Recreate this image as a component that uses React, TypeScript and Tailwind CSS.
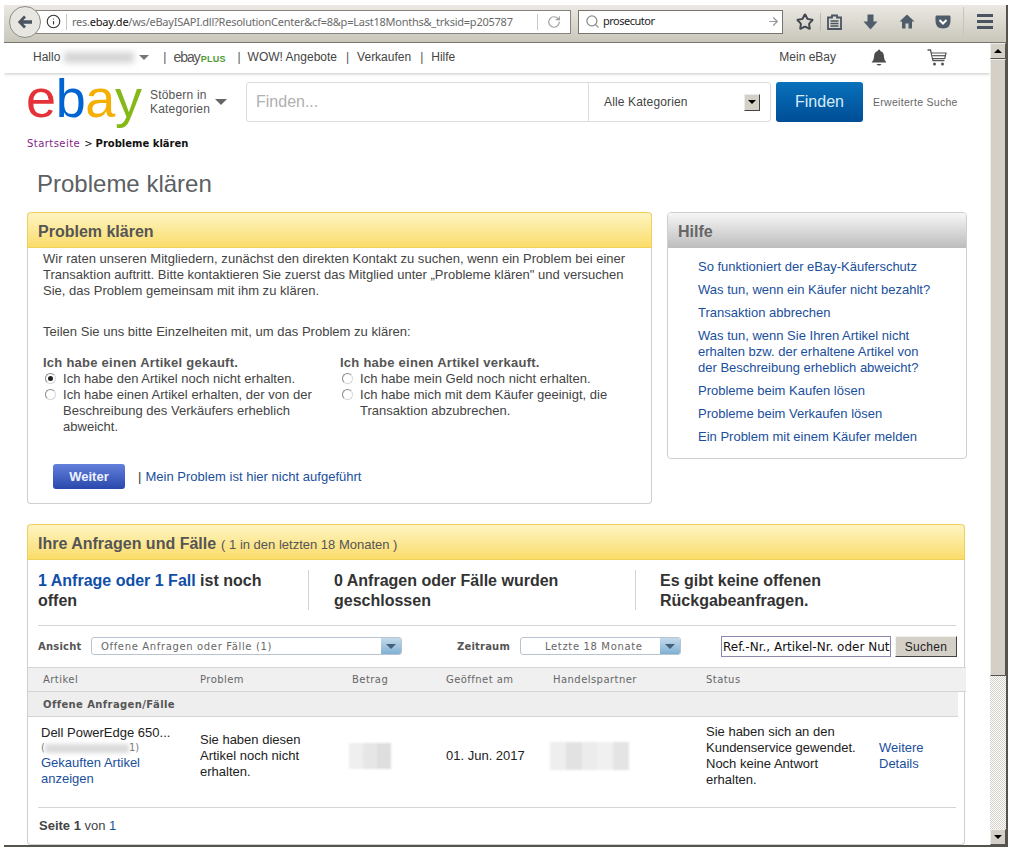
import React from "react";
import { Info, RotateCw, Search, ArrowRight, Star } from "lucide-react";

const sans = "font-['Liberation_Sans',Arial,sans-serif]";
const verdana = "font-['DejaVu_Sans',sans-serif]";

function Radio({ checked }: { checked?: boolean }) {
  return (
    <span className="mt-[2px] flex h-[11px] w-[11px] shrink-0 items-center justify-center rounded-full border border-[#8a8a8a] border-r-[#d8d8d8] border-b-[#d8d8d8] bg-white">
      {checked && <span className="h-[5px] w-[5px] rounded-full bg-[#222]" />}
    </span>
  );
}

function RadioRow({ checked, children }: { checked?: boolean; children: React.ReactNode }) {
  return (
    <div className="flex gap-[7px] pl-[2px]">
      <Radio checked={checked} />
      <span>{children}</span>
    </div>
  );
}

function Caret({ className }: { className: string }) {
  return <span className={"h-0 w-0 border-x-[5px] border-t-[5px] border-x-transparent " + className} />;
}

function BlueSelect({ text, width, indent }: { text: string; width: string; indent: string }) {
  return (
    <div className={"flex h-[18px] items-center rounded-[3px] border border-[#b8c4d0] bg-white " + width}>
      <span className={"flex-1 pt-[1px] text-[10px] tracking-[0.65px] text-[#666] " + verdana + " " + indent}>{text}</span>
      <span className="flex h-full w-[20px] items-center justify-center rounded-r-[2px] bg-gradient-to-b from-[#c4daea] to-[#7fb0d4]">
        <Caret className="border-t-[#44607a]" />
      </span>
    </div>
  );
}

function Toolbar() {
  return (
    <div className="flex h-[38px] shrink-0 items-center border-b border-b-[#77756f] bg-gradient-to-b from-[#ece9e4] to-[#c9c6ba] pb-[4px]">
      <div className="z-10 ml-[5px] flex h-[32px] w-[32px] shrink-0 items-center justify-center rounded-full border border-[#8e8c86] bg-[#e8e6e1]">
        <svg width="16" height="14" viewBox="0 0 16 14">
          <path d="M7 0.5 L0.8 7 L7 13.5 L9 11.6 L6.2 8.8 H15 V5.2 H6.2 L9 2.4 Z" fill="#4a5561" />
        </svg>
      </div>
      <div className="ml-[-7px] flex h-[24px] w-[537px] items-center border border-[#85837d] bg-white pl-[11px]">
        <Info size={15} strokeWidth={1.8} className="shrink-0 text-[#333]" />
        <span className="ml-[5px] h-[16px] w-px bg-[#c8c8c8]" />
        <span className="ml-[5px] w-[440px] whitespace-nowrap font-['Noto_Sans',sans-serif] text-[11px] leading-none tracking-[-0.24px] text-[#6a6a6a]">
          res.<span className="text-[#111]">ebay.de</span>/ws/eBayISAPI.dll?ResolutionCenter&amp;cf=8&amp;p=Last18Months&amp;_trksid=p205787
        </span>
        <span className="ml-[25px] h-[16px] w-px bg-[#c8c8c8]" />
        <RotateCw size={14} strokeWidth={2} className="ml-[9px] text-[#9a9a9a]" />
      </div>
      <div className="ml-[7px] flex h-[24px] w-[205px] items-center border border-[#77756f] bg-white pl-[6px]">
        <Search size={15} strokeWidth={2} className="shrink-0 text-[#8a8a8a]" />
        <span className="ml-[3px] flex-1 font-['Noto_Sans',sans-serif] text-[11px] tracking-[-0.5px] text-[#222]">prosecutor</span>
        <ArrowRight size={13} strokeWidth={2.2} className="mr-[2px] text-[#999]" />
      </div>
      <div className="ml-[13px] flex items-center">
        <Star size={18} strokeWidth={2.6} className="text-[#3e4650]" />
        <span className="ml-[6px] h-[18px] w-px bg-[#bdbab2]" />
        <svg className="ml-[6px]" width="15" height="16" viewBox="0 0 15 16">
          <path d="M1 3.5 H5 V1.5 H10 V3.5 H14 V15 H1 Z" fill="none" stroke="#4a5561" strokeWidth="1.8" />
          <path d="M3.5 7 H11.5 M3.5 9.5 H11.5 M3.5 12 H11.5" stroke="#4a5561" strokeWidth="1.4" />
        </svg>
        <svg className="ml-[21px]" width="15" height="16" viewBox="0 0 15 16">
          <path d="M4.5 0.5 H10.5 V7.5 H14.5 L7.5 15.5 L0.5 7.5 H4.5 Z" fill="#4f5d6b" />
        </svg>
        <svg className="ml-[21px]" width="16" height="15" viewBox="0 0 16 15">
          <path d="M8 0.5 L15.5 7.5 H13 V14.5 H9.5 V9.5 H6.5 V14.5 H3 V7.5 H0.5 Z" fill="#4f5d6b" />
        </svg>
        <svg className="ml-[20px]" width="16" height="14" viewBox="0 0 16 14">
          <path d="M1.5 0.5 H14.5 Q15.5 0.5 15.5 2 V6 Q15.5 13.5 8 13.5 Q0.5 13.5 0.5 6 V2 Q0.5 0.5 1.5 0.5 Z" fill="#4f5d6b" />
          <path d="M4.5 5 L8 8.5 L11.5 5" fill="none" stroke="#fff" strokeWidth="2" />
        </svg>
        <span className="ml-[12px] h-[30px] w-px bg-[#c8c5bd]" />
        <div className="ml-[13px] flex w-[16px] flex-col gap-[3px]">
          <span className="h-[3px] bg-[#4a5561]" />
          <span className="h-[3px] bg-[#4a5561]" />
          <span className="h-[3px] bg-[#4a5561]" />
        </div>
      </div>
    </div>
  );
}

function Scrollbar() {
  const btn = "flex h-[16px] shrink-0 items-center justify-center border border-[#eeece6] border-r-[#55534e] border-b-[#55534e] bg-[#d4d0c8]";
  return (
    <div className="flex w-[16px] shrink-0 flex-col bg-[repeating-conic-gradient(#d4d0c8_0%_25%,#ffffff_0%_50%)] bg-[length:2px_2px]">
      <div className={btn}>
        <span className="h-0 w-0 border-x-[4px] border-b-[4px] border-x-transparent border-b-black" />
      </div>
      <div className="h-[617px] shrink-0 border border-[#eeece6] border-r-[#55534e] border-b-[#55534e] bg-[#d4d0c8]" />
      <div className="flex-1" />
      <div className={btn}>
        <span className="h-0 w-0 border-x-[4px] border-t-[4px] border-x-transparent border-t-black" />
      </div>
    </div>
  );
}

function TopNav() {
  const sep = <span className="text-[#555]">|</span>;
  return (
    <div className="relative flex h-[30px] shrink-0 items-center bg-white pb-[2px] pl-[29px] text-[12px] text-[#444] shadow-[0_1px_3px_rgba(0,0,0,0.22)]">
      <span>Hallo</span>
      <span className="ml-[4px] h-[11px] w-[70px] bg-[#d4d4d4] blur-[3px]" />
      <Caret className="ml-[5px] border-t-[#777]" />
      <span className="ml-[14px]">{sep}</span>
      <span className="ml-[7px] flex w-[55px] items-baseline">
        <span className="text-[14px] tracking-[-1px] text-[#555]">ebay</span>
        <span className="ml-[1px] text-[9px] font-bold tracking-[0.2px] text-[#4f9a32]">PLUS</span>
      </span>
      <span className="ml-[9px]">{sep}</span>
      <span className="ml-[7px]">WOW! Angebote</span>
      <span className="ml-[9px]">{sep}</span>
      <span className="ml-[8px]">Verkaufen</span>
      <span className="ml-[9px]">{sep}</span>
      <span className="ml-[8px]">Hilfe</span>
      <span className="ml-[324px]">Mein eBay</span>
      <svg className="ml-[35px]" width="16" height="17" viewBox="0 0 16 17">
        <path d="M8 0.5 Q9.3 0.5 9.3 2 Q13 3 13 8 Q13 11.5 15.5 13.5 H0.5 Q3 11.5 3 8 Q3 3 6.7 2 Q6.7 0.5 8 0.5 Z" fill="#4c4c4c" />
        <path d="M5.5 15 H10.5 Q9.5 16.5 8 16.5 Q6.5 16.5 5.5 15 Z" fill="#4c4c4c" />
      </svg>
      <svg className="ml-[40px]" width="20" height="17" viewBox="0 0 20 17">
        <path d="M0.5 1 H3.5 L6 11.5 H17.5" fill="none" stroke="#555" strokeWidth="1.3" />
        <path d="M4.8 4 H19 L17.8 9.5 H6" fill="#fff" stroke="#555" strokeWidth="1.2" />
        <path d="M5.2 6.7 H18.4" stroke="#555" strokeWidth="1.2" />
        <circle cx="7.5" cy="15" r="1.5" fill="#555" />
        <circle cx="15.5" cy="15" r="1.5" fill="#555" />
      </svg>
    </div>
  );
}

function SearchRow() {
  return (
    <div className="flex h-[49px] shrink-0 items-end pl-[23px]">
      <div className="flex h-[40px] items-center">
        <div className="ml-[-1px] mt-[-9px] w-[120px] whitespace-nowrap text-[54px] leading-none tracking-[-0.4px]">
          <span className="text-[#e53238]">e</span>
          <span className="text-[#0064d2]">b</span>
          <span className="text-[#f5af02]">a</span>
          <span className="text-[#86b817]">y</span>
        </div>
        <div className="ml-[4px] w-[65px] text-[12px] leading-[14px] tracking-[0.2px] text-[#555]">
          Stöbern in Kategorien
        </div>
        <Caret className="border-x-[6px] border-t-[6px] border-t-[#666]" />
        <div className="ml-[19px] flex h-[40px] w-[525px] items-center rounded-[3px] border border-[#dcdcdc] bg-white">
          <span className="w-[341px] pl-[9px] text-[16px] text-[#b0b0b0]">Finden...</span>
          <span className="h-full w-px bg-[#dcdcdc]" />
          <span className="w-[155px] pl-[15px] text-[12px] tracking-[0.15px] text-[#444]">Alle Kategorien</span>
          <span className="flex h-[17px] w-[16px] items-center justify-center border border-[#eeece6] border-r-[#444] border-b-[#444] bg-[#d4d0c8]">
            <span className="h-0 w-0 border-x-[4px] border-t-[4px] border-x-transparent border-t-black" />
          </span>
        </div>
        <div className="ml-[5px] flex h-[40px] w-[87px] items-center justify-center rounded-[3px] bg-gradient-to-b from-[#0a71bb] to-[#004d96] text-[16px] text-[#d8ecfa]">
          Finden
        </div>
        <span className="ml-[10px] whitespace-nowrap pt-[1px] text-[10.5px] tracking-[0.3px] text-[#666]">Erweiterte Suche</span>
      </div>
    </div>
  );
}

function ProblemCard() {
  return (
    <div className="h-[292px] w-[625px] rounded-[4px] border border-[#cfcfcf] border-t-0">
      <div className="mx-[-1px] flex h-[36px] items-center rounded-t-[4px] border border-[#f0d05c] bg-gradient-to-b from-[#fdf4c0] to-[#fbdc68] pl-[10px] pt-[3px] text-[16px] font-bold text-[#555]">
        Problem klären
      </div>
      <div className="pl-[15px] pr-[10px] pt-[3px] text-[13px] leading-[16px] tracking-[0.02px] text-[#444]">
        <p>
          Wir raten unseren Mitgliedern, zunächst den direkten Kontakt zu suchen, wenn ein Problem bei einer Transaktion auftritt. Bitte kontaktieren Sie zuerst das Mitglied unter „Probleme klären" und versuchen Sie, das Problem gemeinsam mit ihm zu klären.
        </p>
        <p className="mt-[25px]">Teilen Sie uns bitte Einzelheiten mit, um das Problem zu klären:</p>
        <div className="mt-[15px] flex">
          <div className="w-[297px] pr-[25px]">
            <div className="font-bold tracking-[0.25px] text-[#555]">Ich habe einen Artikel gekauft.</div>
            <RadioRow checked>Ich habe den Artikel noch nicht erhalten.</RadioRow>
            <RadioRow>Ich habe einen Artikel erhalten, der von der Beschreibung des Verkäufers erheblich abweicht.</RadioRow>
          </div>
          <div className="w-[280px]">
            <div className="font-bold tracking-[0.25px] text-[#555]">Ich habe einen Artikel verkauft.</div>
            <RadioRow>Ich habe mein Geld noch nicht erhalten.</RadioRow>
            <RadioRow>Ich habe mich mit dem Käufer geeinigt, die Transaktion abzubrechen.</RadioRow>
          </div>
        </div>
        <div className="mt-[29px] flex items-center pl-[10px]">
          <span className="flex h-[25px] w-[72px] items-center justify-center rounded-[3px] bg-gradient-to-b from-[#6480dc] to-[#2a48ac] text-[13px] font-bold text-[#eef2ff]">
            Weiter
          </span>
          <span className="ml-[13px] text-[#333]">|</span>
          <a className="ml-[4px] text-[#1a4f9c]">Mein Problem ist hier nicht aufgeführt</a>
        </div>
      </div>
    </div>
  );
}

function HelpCard() {
  const links = [
    "So funktioniert der eBay-Käuferschutz",
    "Was tun, wenn ein Käufer nicht bezahlt?",
    "Transaktion abbrechen",
    "Was tun, wenn Sie Ihren Artikel nicht erhalten bzw. der erhaltene Artikel von der Beschreibung erheblich abweicht?",
    "Probleme beim Kaufen lösen",
    "Probleme beim Verkaufen lösen",
    "Ein Problem mit einem Käufer melden",
  ];
  return (
    <div className="h-[247px] w-[300px] overflow-hidden rounded-[4px] border border-[#cfcfcf]">
      <div className="flex h-[35px] items-center bg-gradient-to-b from-[#f6f6f6] to-[#bdbdbd] pl-[10px] pt-[2px] text-[16px] font-bold text-[#666]">
        Hilfe
      </div>
      <div className="flex flex-col gap-[7px] pl-[30px] pr-[30px] pt-[11px] text-[13px] leading-[16px] text-[#1a4f9c]">
        {links.map((l) => (
          <a key={l}>{l}</a>
        ))}
      </div>
    </div>
  );
}

function CasesCard() {
  const head = "flex items-center";
  return (
    <div className="mt-[20px] h-[321px] w-[938px] shrink-0 rounded-[4px] border border-[#cfcfcf] border-t-0">
      <div className="mx-[-1px] flex h-[36px] items-baseline gap-[5px] rounded-t-[4px] border border-[#f0d05c] bg-gradient-to-b from-[#fdf4c0] to-[#fbdc68] pl-[10px] pt-[7px] text-[#555]">
        <span className="text-[16px] font-bold">Ihre Anfragen und Fälle</span>
        <span className="text-[13px]">( 1 in den letzten 18 Monaten )</span>
      </div>

      <div className="ml-[10px] mr-[8px] flex h-[66px] items-start border-b border-[#d4d4d4] pt-[10px] text-[16px] font-bold leading-[20px] text-[#333]">
        <div className="h-[40px] w-[271px] border-r border-[#d4d4d4] pr-[30px] pt-[1px]">
          <span className="text-[#0f4fa8]">1 Anfrage oder 1 Fall</span> ist noch offen
        </div>
        <div className="h-[40px] w-[327px] border-r border-[#d4d4d4] pl-[25px] pr-[50px] pt-[1px]">0 Anfragen oder Fälle wurden geschlossen</div>
        <div className="w-[280px] pl-[24px] pt-[1px]">Es gibt keine offenen Rückgabeanfragen.</div>
      </div>

      <div className="ml-[10px] flex h-[41px] items-start pt-[11px]">
        <span className={"mt-[2px] w-[53px] text-[10px] font-bold tracking-[0.2px] text-[#555] " + verdana}>Ansicht</span>
        <BlueSelect text="Offene Anfragen oder Fälle (1)" width="w-[311px]" indent="pl-[9px]" />
        <span className={"ml-[55px] mt-[2px] w-[63px] text-[10px] font-bold tracking-[0.2px] text-[#555] " + verdana}>Zeitraum</span>
        <BlueSelect text="Letzte 18 Monate" width="w-[161px]" indent="pl-[24px]" />
        <input
          readOnly
          value="Ref.-Nr., Artikel-Nr. oder Nutzer"
          className={"ml-[40px] mt-[-1px] h-[21px] w-[170px] border border-[#8f87b0] bg-white pl-[1px] text-[12px] text-[#111] outline-none " + verdana}
        />
        <div className="ml-[4px] mt-[-1px] flex h-[21px] w-[62px] items-center justify-center border border-[#f4f2ee] border-r-[#444] border-b-[#444] bg-[#d4d0c8] text-[12px] tracking-[0.3px] text-[#222]">
          Suchen
        </div>
      </div>

      <div className={"grid h-[25px] w-[938px] grid-cols-[157px_152px_94px_107px_153px_1fr] items-center border-y border-[#d4d4d4] bg-[#f0f0f0] pl-[15px] text-[10px] tracking-[0.45px] text-[#666] " + verdana}>
        <span className={head}>Artikel</span>
        <span className={head}>Problem</span>
        <span className={head}>Betrag</span>
        <span className={head}>Geöffnet am</span>
        <span className={head}>Handelspartner</span>
        <span className={head}>Status</span>
      </div>
      <div className={"flex h-[25px] w-[930px] items-center border-b border-[#d4d4d4] bg-[#eeeeee] pl-[15px] text-[10px] font-bold tracking-[0.4px] text-[#555] " + verdana}>
        Offene Anfragen/Fälle
      </div>

      <div className="ml-[10px] mr-[8px] grid h-[91px] grid-cols-[159px_152px_94px_107px_153px_173px_1fr] items-center border-b border-[#d4d4d4] pb-[12px] pl-[3px] text-[13px] leading-[16px] text-[#222]">
        <div className="pr-[20px]">
          <div className="whitespace-nowrap">Dell PowerEdge 650...</div>
          <div className={"flex h-[14px] items-center text-[10px] text-[#777] " + verdana}>
            (<span className="h-[9px] w-[84px] bg-[#dadada] blur-[2px]" />1)
          </div>
          <a className="text-[#1a4f9c]">Gekauften Artikel anzeigen</a>
        </div>
        <div className="pr-[30px]">Sie haben diesen Artikel noch nicht erhalten.</div>
        <div className="ml-[-3px] flex h-[26px] w-[42px] blur-[1px]">
          <span className="w-1/3 bg-[#efefef]" />
          <span className="w-1/3 bg-[#e6e6e6]" />
          <span className="w-1/3 bg-[#dedede]" />
        </div>
        <div className="whitespace-nowrap">01. Jun. 2017</div>
        <div className="ml-[-3px] flex h-[28px] w-[79px] blur-[1px]">
          <span className="w-1/5 bg-[#eeeeee]" />
          <span className="w-1/5 bg-[#e2e2e2]" />
          <span className="w-1/5 bg-[#ececec]" />
          <span className="w-1/5 bg-[#f0f0f0]" />
          <span className="w-1/5 bg-[#e4e4e4]" />
        </div>
        <div className="pr-[15px]">Sie haben sich an den Kundenservice gewendet. Noch keine Antwort erhalten.</div>
        <a className="pr-[20px] text-[#1a4f9c]">Weitere Details</a>
      </div>

      <div className="ml-[11px] pt-[8px] text-[13px] text-[#444]">
        <span className="font-bold">Seite 1</span> von <a className="text-[#1a4f9c]">1</a>
      </div>
    </div>
  );
}

export default function App() {
  return (
    <div className={"h-[849px] w-[1010px] overflow-hidden bg-white pl-[4px] pt-[5px] " + sans}>
      <div className="flex h-[842px] w-[1004px] flex-col overflow-hidden border-r-[2px] border-b-[2px] border-r-[#55534e] border-b-[#55534e]">
        <Toolbar />
        <div className="flex min-h-0 flex-1">
          <div className="flex w-[986px] shrink-0 flex-col overflow-hidden bg-white">
            <TopNav />
            <SearchRow />
            <div className="ml-[23px] mt-[14px] flex h-[14px] shrink-0 items-center gap-[4px] text-[10px] text-[#111]">
              <a className={"tracking-[0.45px] text-[#7f1f85] " + verdana}>Startseite</a>
              <span className={verdana}>&gt;</span>
              <b className={"ml-[-1px] " + verdana}>Probleme klären</b>
            </div>
            <h1 className="ml-[33px] mt-[19px] h-[30px] shrink-0 text-[24px] leading-[30px] text-[#5c5f63]">Probleme klären</h1>
            <div className="ml-[23px] mt-[13px] flex shrink-0 items-start gap-[15px]">
              <ProblemCard />
              <HelpCard />
            </div>
            <div className="ml-[23px]">
              <CasesCard />
            </div>
          </div>
          <Scrollbar />
        </div>
      </div>
    </div>
  );
}
